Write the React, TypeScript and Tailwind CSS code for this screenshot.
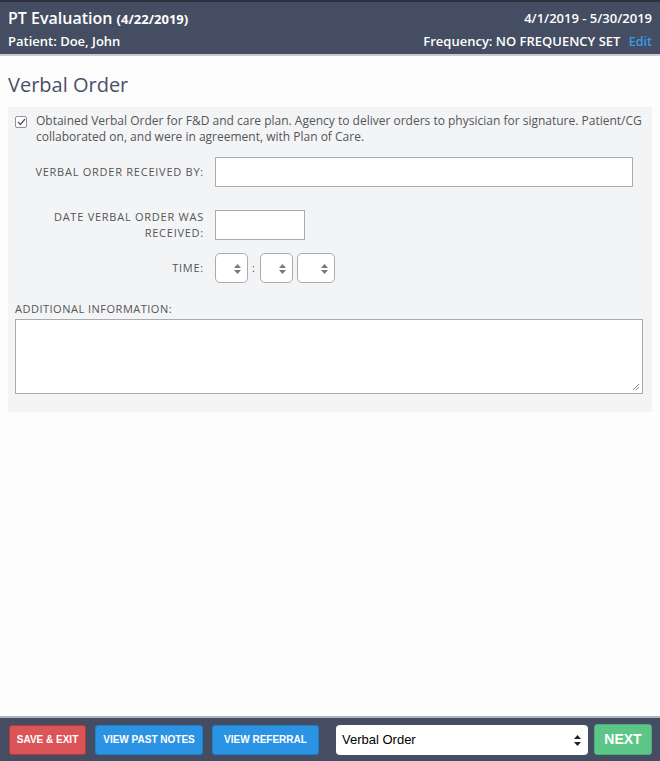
import { useState } from "react";

const openSans = { fontFamily: '"Open Sans", "Noto Sans", sans-serif' };

function TimeSelect({ width }: { width: string }) {
  return (
    <div className={`relative h-[30px] ${width} rounded-[5px] border border-[#a9abb0] bg-white`}>
      <svg className="absolute right-[6px] top-[10px]" width="7" height="10" viewBox="0 0 7 10">
        <path d="M3.5 0 L7 4 L0 4 Z" fill="#777" />
        <path d="M3.5 10 L7 6 L0 6 Z" fill="#777" />
      </svg>
    </div>
  );
}

export default function App() {
  const [checked, setChecked] = useState(true);

  return (
    <div className="flex h-screen w-full flex-col bg-[#fdfdfd]" style={openSans}>
      {/* header */}
      <div className="border-t-2 border-b-2 border-t-[#2b303c] border-b-[#c9cbd0] bg-[#454d62] px-[8px] text-white">
        <div className="flex items-center justify-between pt-[5px]">
          <div className="text-[16px] font-semibold leading-[22px]">
            PT Evaluation <span className="text-[13px] font-bold">(4/22/2019)</span>
          </div>
          <div className="text-[13px] font-semibold">4/1/2019 - 5/30/2019</div>
        </div>
        <div className="flex items-center justify-between pb-[3px] pt-[2px] text-[13px] font-semibold leading-[19px]">
          <div>Patient: Doe, John</div>
          <div>
            Frequency: NO FREQUENCY SET <span className="ml-[5px] text-[12.5px] text-[#3a9ae8]">Edit</span>
          </div>
        </div>
      </div>

      {/* content */}
      <div className="flex-1 px-[8px]">
        <h1 className="pb-[9px] pt-[16px] text-[20px] leading-[26px] text-[#4a5068]">Verbal Order</h1>
        <div className="bg-[#f3f4f6] pb-[18px] pl-[7px] pr-[9px] pt-[6px] text-[#555]">
          <div className="flex items-start gap-[9px]">
            <button
              onClick={() => setChecked(!checked)}
              className="mt-[3px] flex h-[12px] w-[12px] shrink-0 items-center justify-center rounded-[2px] border border-[#8e9096] bg-white"
            >
              {checked && (
                <svg width="9" height="8" viewBox="0 0 9 8">
                  <path d="M1 4 L3.5 6.5 L8 1" stroke="#555" strokeWidth="1.3" fill="none" />
                </svg>
              )}
            </button>
            <p className="text-[12px] leading-[16px]">
              Obtained Verbal Order for F&amp;D and care plan. Agency to deliver orders to physician for signature. Patient/CG
              collaborated on, and were in agreement, with Plan of Care.
            </p>
          </div>

          <div className="mt-[12px] flex items-center gap-[11px]">
            <label className="w-[189px] text-right text-[11px] tracking-[0.75px]">VERBAL ORDER RECEIVED BY:</label>
            <div className="h-[30px] w-[418px] border border-[#a9abb0] bg-white" />
          </div>

          <div className="mt-[22px] flex items-center gap-[11px]">
            <label className="w-[189px] text-right text-[11px] leading-[16px] tracking-[0.75px]">
              DATE VERBAL ORDER WAS
              <br />
              RECEIVED:
            </label>
            <div className="h-[30px] w-[90px] border border-[#a9abb0] bg-white" />
          </div>

          <div className="mt-[12px] flex items-center gap-[11px]">
            <label className="w-[189px] text-right text-[11px] tracking-[0.75px]">TIME:</label>
            <div className="flex items-center">
              <TimeSelect width="w-[33px]" />
              <span className="ml-[4px] mr-[5px] text-[11px]">:</span>
              <TimeSelect width="w-[33px]" />
              <span className="w-[4px]" />
              <TimeSelect width="w-[38px]" />
            </div>
          </div>

          <div className="mt-[18px] text-[11px] tracking-[0.5px]">ADDITIONAL INFORMATION:</div>
          <div className="relative mt-[1px] h-[75px] w-full border border-[#a9abb0] bg-white">
            <svg className="absolute bottom-[2px] right-[2px]" width="8" height="8" viewBox="0 0 8 8">
              <path d="M1 7 L7 1 M4 7 L7 4" stroke="#888" strokeWidth="1" />
            </svg>
          </div>
        </div>
      </div>

      {/* footer */}
      <div
        className="flex h-[45px] items-center border-t-2 border-[#b1b4ba] bg-[#454d62] pl-[9px] pr-[8px]"
        style={{ fontFamily: '"Liberation Sans", Arial, sans-serif' }}
      >
        <button className="h-[30px] w-[77px] rounded-[3px] border border-[#b9383c] bg-[#db5457] text-[10px] font-bold text-white">
          SAVE &amp; EXIT
        </button>
        <button className="ml-[9px] h-[30px] w-[108px] rounded-[3px] border border-[#1f7fc9] bg-[#2b93e3] text-[10px] font-bold text-white">
          VIEW PAST NOTES
        </button>
        <button className="ml-[9px] h-[30px] w-[107px] rounded-[3px] border border-[#1f7fc9] bg-[#2b93e3] text-[10px] font-bold text-white">
          VIEW REFERRAL
        </button>
        <div className="relative ml-[17px] flex h-[30px] w-[252px] items-center rounded-[4px] bg-white pl-[6px] text-[13px] text-black">
          Verbal Order
          <svg className="absolute right-[7px] top-[10px]" width="7" height="11" viewBox="0 0 7 11">
            <path d="M3.5 0 L7 4 L0 4 Z" fill="#222" />
            <path d="M3.5 11 L7 7 L0 7 Z" fill="#222" />
          </svg>
        </div>
        <button className="ml-[6px] h-[31px] w-[58px] rounded-[3px] border border-[#4aae76] bg-[#5cc689] text-[14px] font-bold text-white">
          NEXT
        </button>
      </div>
    </div>
  );
}
